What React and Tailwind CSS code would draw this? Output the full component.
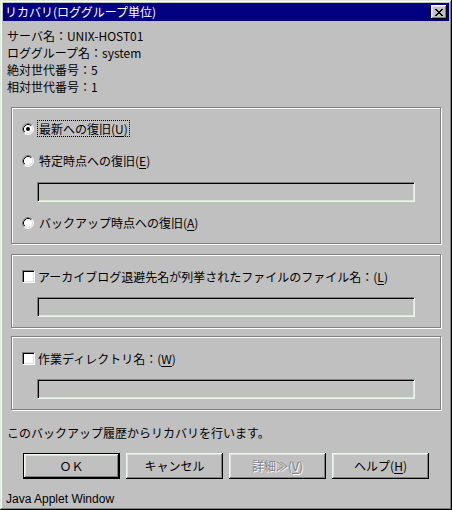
const U = ({ children }) => <span className="underline underline-offset-[2px]">{children}</span>;

const Radio = ({ checked }) => (
  <svg width="12" height="12" viewBox="0 0 12 12" className="shrink-0">
    <circle cx="6" cy="6" r="5" fill="#fff" />
    <path d="M2.11 9.89 A5.5 5.5 0 0 1 9.89 2.11" fill="none" stroke="#808080" />
    <path d="M9.89 2.11 A5.5 5.5 0 0 1 2.11 9.89" fill="none" stroke="#fff" />
    <path d="M2.82 9.18 A4.5 4.5 0 0 1 9.18 2.82" fill="none" stroke="#000" />
    <path d="M9.18 2.82 A4.5 4.5 0 0 1 2.82 9.18" fill="none" stroke="#dfdfdf" />
    {checked && <circle cx="6" cy="6" r="2" fill="#000" />}
  </svg>
);

const Checkbox = () => (
  <div className="w-[13px] h-[13px] shrink-0 bg-white border border-t-[#808080] border-l-[#808080] border-b-white border-r-white shadow-[inset_1px_1px_#000,inset_-1px_-1px_#dfdfdf]" />
);

const Field = () => (
  <div className="ml-[25px] h-[20px] w-[378px] border border-t-[#808080] border-l-[#808080] border-b-[#eaf6ea] border-r-[#eaf6ea] bg-[#c0c0c0] shadow-[inset_1px_1px_#000,inset_-1px_-1px_#d8ead8]" />
);

const Group = ({ className, children }) => (
  <div className={`ml-[8px] w-[430px] flex flex-col border border-[#808080] shadow-[inset_1px_1px_#fff,1px_1px_#fff] ${className}`}>
    {children}
  </div>
);

const CloseGlyph = () => {
  const px = [
    [0, 0], [1, 0], [6, 0], [7, 0],
    [1, 1], [2, 1], [5, 1], [6, 1],
    [2, 2], [3, 2], [4, 2], [5, 2],
    [3, 3], [4, 3],
    [2, 4], [3, 4], [4, 4], [5, 4],
    [1, 5], [2, 5], [5, 5], [6, 5],
    [0, 6], [1, 6], [6, 6], [7, 6],
  ];
  return (
    <svg width="8" height="7" viewBox="0 0 8 7" shapeRendering="crispEdges">
      {px.map(([x, y]) => (
        <rect key={`${x}-${y}`} x={x} y={y} width="1" height="1" fill="#000" />
      ))}
    </svg>
  );
};

const Button = ({ children, isDefault, disabled }) => (
  <div
    className={`w-[97px] h-[26px] flex items-center justify-center ${
      isDefault ? "border border-black" : ""
    }`}
  >
    <div
      className={`w-full h-full flex items-center justify-center bg-[#c0c0c0] shadow-[inset_-1px_-1px_#000,inset_1px_1px_#eef8ee,inset_-2px_-2px_#808080,inset_2px_2px_#dfdfdf] ${
        disabled ? "text-[#808080] [text-shadow:1px_1px_#fff]" : "text-black"
      }`}
    >
      {children}
    </div>
  </div>
);

export default function App() {
  return (
    <div className="w-[452px] h-[510px] overflow-hidden bg-[#c0c0c0] p-[3px] flex flex-col text-[12px] text-black font-['Noto_Sans_CJK_JP',sans-serif] shadow-[inset_-1px_-1px_#000,inset_1px_1px_#dcebdc,inset_-2px_-2px_#808080,inset_2px_2px_#fff]">
      {/* title bar */}
      <div className="h-[18px] shrink-0 bg-[#000080] flex items-center justify-between pl-[2px] pr-[2px]">
        <span className="text-white leading-[18px]">リカバリ(ロググループ単位)</span>
        <div className="w-[16px] h-[14px] bg-[#c0c0c0] flex items-center justify-center shadow-[inset_-1px_-1px_#000,inset_1px_1px_#fff,inset_-2px_-2px_#808080,inset_2px_2px_#dfdfdf]">
          <CloseGlyph />
        </div>
      </div>

      {/* info */}
      <div className="mt-[6px] pl-[4px] leading-[17px]">
        <div>サーバ名：UNIX-HOST01</div>
        <div>ロググループ名：system</div>
        <div>絶対世代番号：5</div>
        <div>相対世代番号：1</div>
      </div>

      {/* restore mode */}
      <Group className="mt-[12px] h-[137px] pt-[12px]">
        <div className="h-[17px] pl-[10px] flex items-center gap-[4px]">
          <Radio checked />
          <span className="leading-[15px] px-[1px] outline outline-1 outline-dotted outline-black">
            最新への復旧(<U>U</U>)
          </span>
        </div>
        <div className="mt-[15px] h-[17px] pl-[10px] flex items-center gap-[5px]">
          <Radio />
          <span>特定時点への復旧(<U>E</U>)</span>
        </div>
        <div className="mt-[13px]">
          <Field />
        </div>
        <div className="mt-[12px] h-[17px] pl-[10px] flex items-center gap-[5px]">
          <Radio />
          <span>バックアップ時点への復旧(<U>A</U>)</span>
        </div>
      </Group>

      {/* archive log */}
      <Group className="mt-[10px] h-[74px] pt-[13px]">
        <div className="h-[17px] pl-[10px] flex items-center gap-[3px]">
          <Checkbox />
          <span>アーカイブログ退避先名が列挙されたファイルのファイル名：(<U>L</U>)</span>
        </div>
        <div className="mt-[12px]">
          <Field />
        </div>
      </Group>

      {/* work dir */}
      <Group className="mt-[8px] h-[74px] pt-[13px]">
        <div className="h-[17px] pl-[10px] flex items-center gap-[3px]">
          <Checkbox />
          <span>作業ディレクトリ名：(<U>W</U>)</span>
        </div>
        <div className="mt-[12px]">
          <Field />
        </div>
      </Group>

      <div className="mt-[14px] pl-[4px] leading-[17px]">このバックアップ履歴からリカバリを行います。</div>

      <div className="mt-[12px] ml-[20px] flex gap-[6px]">
        <Button isDefault>ＯＫ</Button>
        <Button>キャンセル</Button>
        <Button disabled>
          <span>詳細≫(<U>V</U>)</span>
        </Button>
        <Button>
          <span>ヘルプ(<U>H</U>)</span>
        </Button>
      </div>

      <div className="mt-[12px] pl-[3px] leading-[16px] font-['Liberation_Sans',sans-serif]">Java Applet Window</div>
    </div>
  );
}
